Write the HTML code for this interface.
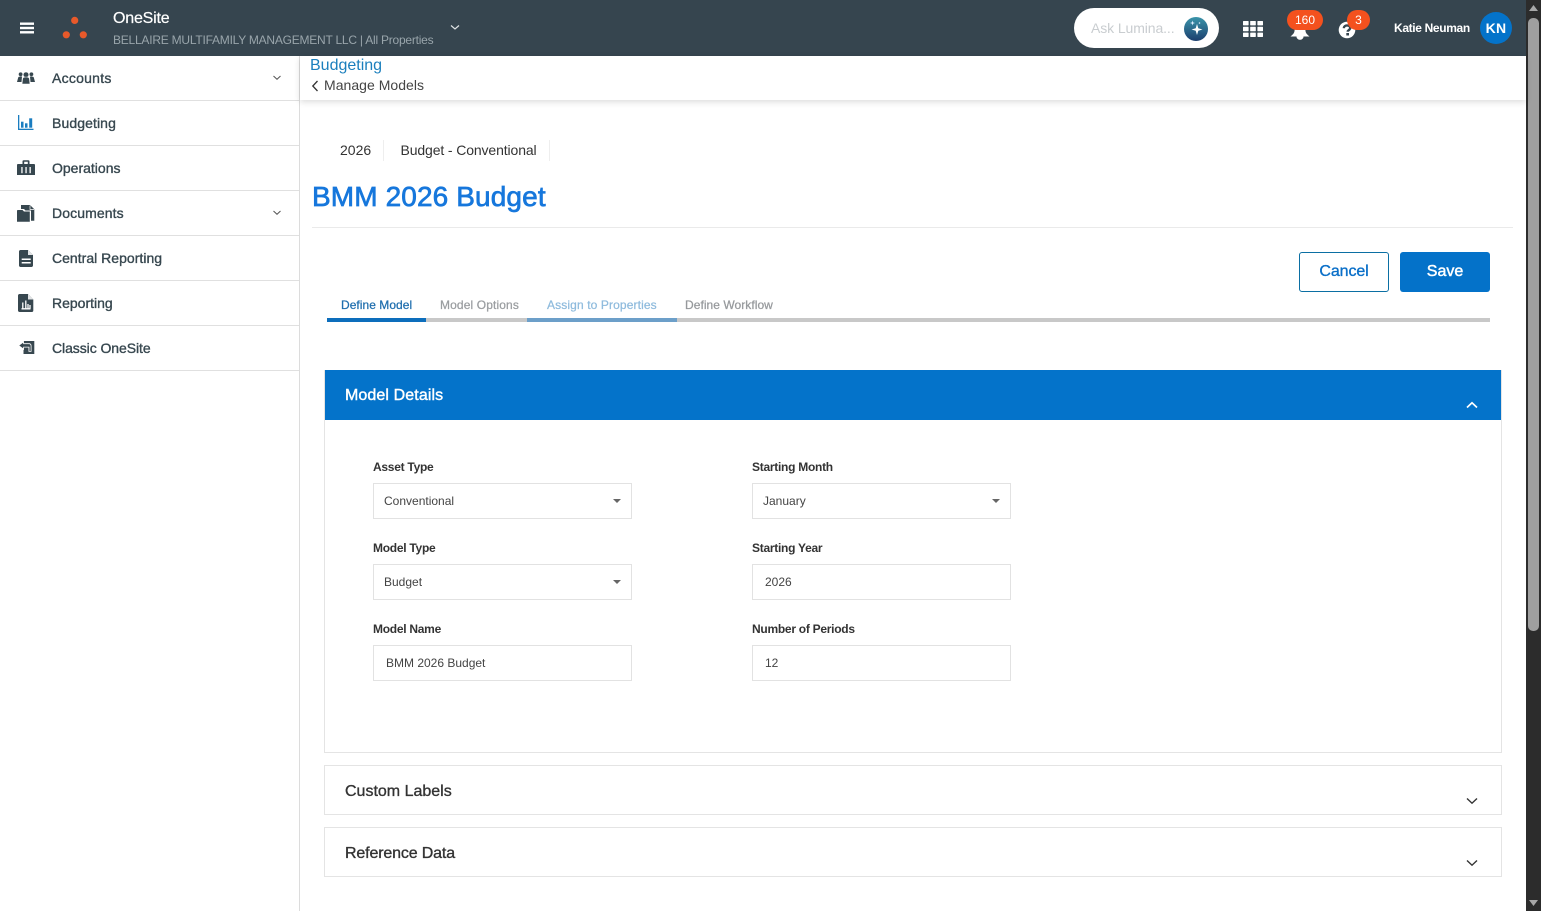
<!DOCTYPE html>
<html lang="en">
<head>
<meta charset="utf-8">
<title>OneSite Budgeting</title>
<style>
html,body{margin:0;padding:0;width:1541px;height:911px;overflow:hidden;background:#fff;font-family:"Liberation Sans",sans-serif;color:#333}
*{box-sizing:border-box}
.a{position:absolute}
.t{position:absolute;white-space:nowrap;line-height:20px;height:20px}
svg{position:absolute;overflow:visible}
.row{position:absolute;left:0;width:299px;height:45px;border-bottom:1px solid #e0e0e0}
.nav{font-size:14px;font-weight:400;color:#37474f;left:52px;-webkit-text-stroke:.35px #37474f}
.lab{font-size:12px;font-weight:700;color:#333;letter-spacing:-.27px}
.val{font-size:12px;color:#444}
.box{position:absolute;width:259px;height:36px;border:1px solid #e2e2e2;background:#fff}
.tab{font-size:12px;-webkit-text-stroke:.25px currentColor;letter-spacing:.04px}
.caret{position:absolute;width:0;height:0;border-left:4px solid transparent;border-right:4px solid transparent;border-top:4px solid #666}
.panel{position:absolute;left:324px;width:1178px;border:1px solid #e4e4e4;background:#fff}
.ph{font-size:16px;color:#333;left:345px;-webkit-text-stroke:.35px #333}
</style>
</head>
<body>

<!-- top bar -->
<div class="a" style="left:0;top:0;width:1526px;height:56px;background:#36454f"></div>
<svg style="left:0;top:0" width="100" height="56">
  <rect x="20" y="22.5" width="14" height="2.4" fill="#fff"/>
  <rect x="20" y="26.8" width="14" height="2.4" fill="#fff"/>
  <rect x="20" y="31.1" width="14" height="2.4" fill="#fff"/>
  <circle cx="74.7" cy="20.4" r="3.6" fill="#e8592a"/>
  <circle cx="66.3" cy="34.8" r="3.6" fill="#e8592a"/>
  <circle cx="83.3" cy="34.8" r="3.6" fill="#e8592a"/>
</svg>
<div class="t" style="left:113px;top:10px;font-size:16px;color:#fff;letter-spacing:-.2px;-webkit-text-stroke:.2px #fff;line-height:18px">OneSite</div>
<div class="t" style="left:113px;top:30px;font-size:12px;color:#99a5ab;letter-spacing:-.23px">BELLAIRE MULTIFAMILY MANAGEMENT LLC | All Properties</div>
<svg style="left:450px;top:24px" width="10" height="8"><path d="M1 1.500L5 5L9 1.500" fill="none" stroke="#dfe3e5" stroke-width="1.200"/></svg>

<!-- lumina -->
<div class="a" style="left:1074px;top:8px;width:145px;height:40px;border-radius:20px;background:#fff"></div>
<div class="t" style="left:1091px;top:18px;font-size:14px;color:#c9cdd0;letter-spacing:-.1px">Ask Lumina...</div>
<svg style="left:1184px;top:17px" width="24" height="24">
  <defs><linearGradient id="g" x1="0" y1="0" x2="0" y2="1"><stop offset="0" stop-color="#3a94aa"/><stop offset="1" stop-color="#1c3f6e"/></linearGradient></defs>
  <circle cx="12" cy="12" r="12" fill="url(#g)"/>
  <path d="M13 7L14.300 11.200L18.500 12.500L14.300 13.800L13 18L11.700 13.800L7.500 12.500L11.700 11.200Z" fill="#fff"/>
  <path d="M8.500 3.500L9.100 5.400L11 6L9.100 6.600L8.500 8.500L7.900 6.600L6 6L7.900 5.400Z" fill="#def"/>
  <circle cx="15.500" cy="6" r=".8" fill="#def"/>
</svg>

<!-- grid -->
<svg style="left:1243px;top:21px" width="20" height="16" fill="#fff">
  <rect x="0" y="0" width="5.6" height="4.400" rx=".6"/><rect x="7.200" y="0" width="5.6" height="4.400" rx=".6"/><rect x="14.400" y="0" width="5.6" height="4.400" rx=".6"/>
  <rect x="0" y="5.800" width="5.6" height="4.400" rx=".6"/><rect x="7.200" y="5.800" width="5.6" height="4.400" rx=".6"/><rect x="14.400" y="5.800" width="5.6" height="4.400" rx=".6"/>
  <rect x="0" y="11.600" width="5.6" height="4.400" rx=".6"/><rect x="7.200" y="11.600" width="5.6" height="4.400" rx=".6"/><rect x="14.400" y="11.600" width="5.6" height="4.400" rx=".6"/>
</svg>

<!-- bell -->
<svg style="left:1289px;top:21px" width="22" height="20">
  <path d="M11 2C6.500 2 6 6 5.500 10C5.200 12.500 3.500 13.800 1.500 15.500H20.500C18.500 13.800 16.800 12.500 16.500 10C16 6 15.500 2 11 2Z" fill="#fff"/>
  <path d="M7.500 15.500H14.500C14.500 17.500 12.800 18.800 11 18.800C9.200 18.800 7.500 17.500 7.500 15.500Z" fill="#fff"/>
</svg>
<div class="a" style="left:1287px;top:10px;width:36px;height:20px;border-radius:10px;background:#f4511e"></div>
<div class="t" style="left:1287px;top:10px;width:36px;text-align:center;font-size:12px;color:#fff">160</div>

<!-- help -->
<svg style="left:1338px;top:21px" width="18" height="18">
  <circle cx="9" cy="9" r="8.300" fill="#fff"/>
  <path d="M5.800 7.200C5.900 5.400 7.300 4.400 9 4.400C10.900 4.400 12.200 5.500 12.200 7C12.200 9 9.700 9 9.700 10.800" fill="none" stroke="#36454f" stroke-width="2.400"/>
  <rect x="8.300" y="12" width="2.700" height="2.500" fill="#36454f"/>
</svg>
<div class="a" style="left:1347px;top:10px;width:23px;height:20px;border-radius:10px;background:#f4511e"></div>
<div class="t" style="left:1347px;top:10px;width:23px;text-align:center;font-size:12px;color:#fff">3</div>

<!-- user -->
<div class="t" style="left:1394px;top:18px;font-size:12px;font-weight:700;color:#fff;letter-spacing:-.35px">Katie Neuman</div>
<div class="a" style="left:1480px;top:12px;width:32px;height:32px;border-radius:50%;background:#0473ca"></div>
<div class="t" style="left:1480px;top:18px;width:32px;text-align:center;font-size:14px;font-weight:700;color:#fff;letter-spacing:.3px">KN</div>

<!-- scrollbar -->
<div class="a" style="left:1526px;top:0;width:15px;height:911px;background:#2c2c2c"></div>
<div class="a" style="left:1528px;top:18px;width:11px;height:613px;border-radius:5px;background:#9f9f9f"></div>
<svg style="left:1526px;top:0" width="15" height="911" fill="#a8a8a8">
  <path d="M7.500 5L12 11H3Z"/>
  <path d="M3 900H12L7.500 906Z"/>
</svg>

<!-- sidebar -->
<div class="a" style="left:299px;top:56px;width:1px;height:855px;background:#dcdcdc"></div>
<div class="row" style="top:56px"></div>
<div class="row" style="top:101px"></div>
<div class="row" style="top:146px"></div>
<div class="row" style="top:191px"></div>
<div class="row" style="top:236px"></div>
<div class="row" style="top:281px"></div>
<div class="row" style="top:326px"></div>

<div class="t nav" style="top:68px;letter-spacing:.25px">Accounts</div>
<div class="t nav" style="top:113px;letter-spacing:.1px">Budgeting</div>
<div class="t nav" style="top:158px">Operations</div>
<div class="t nav" style="top:203px;letter-spacing:.1px">Documents</div>
<div class="t nav" style="top:248px;letter-spacing:.02px">Central Reporting</div>
<div class="t nav" style="top:293px">Reporting</div>
<div class="t nav" style="top:338px;letter-spacing:-.07px">Classic OneSite</div>

<svg style="left:272px;top:75px" width="10" height="6"><path d="M1.500 1L5 4.300L8.500 1" fill="none" stroke="#555" stroke-width="1"/></svg>
<svg style="left:272px;top:210px" width="10" height="6"><path d="M1.500 1L5 4.300L8.500 1" fill="none" stroke="#555" stroke-width="1"/></svg>

<!-- accounts icon -->
<svg style="left:17px;top:72px" width="18" height="12" fill="#37474f">
  <circle cx="3.600" cy="2.300" r="1.900"/><path d="M0 10L1.200 5.500C1.500 4.600 2.500 4.300 5 4.500L4.500 10Z"/>
  <circle cx="14.400" cy="2.300" r="1.900"/><path d="M18 10L16.800 5.500C16.500 4.600 15.500 4.300 13 4.500L13.500 10Z"/>
  <circle cx="9" cy="2.700" r="2.700" stroke="#fff" stroke-width=".5"/>
  <path d="M5 12L5.600 6.800C5.800 5.500 7 5 9 5C11 5 12.200 5.500 12.400 6.800L13 12Z" stroke="#fff" stroke-width=".6"/>
</svg>
<!-- budgeting icon -->
<svg style="left:18px;top:115px" width="16" height="16" fill="#1a7dc0">
  <rect x="0" y="0" width="1.300" height="15"/><rect x="0" y="13.700" width="15.500" height="1.300"/>
  <rect x="3" y="6.700" width="2.500" height="6"/><rect x="7" y="8.300" width="2.500" height="4.400"/><rect x="11.200" y="3.300" width="3" height="9.400"/>
</svg>
<!-- operations icon -->
<svg style="left:17px;top:160px" width="18" height="15">
  <path d="M5.500 4V1.500C5.500 .7 6 .3 6.800 .3H11.200C12 .3 12.500 .7 12.500 1.500V4H17C17.600 4 18 4.400 18 5V15H0V5C0 4.400.400 4 1 4Z M7.200 4H10.800V1.800H7.200Z" fill="#37474f" fill-rule="evenodd"/>
  <rect x="4.300" y="7" width="1.300" height="6.200" fill="#fff"/><rect x="8.400" y="7" width="1.300" height="6.200" fill="#fff"/><rect x="12.500" y="7" width="1.300" height="6.200" fill="#fff"/>
</svg>
<!-- documents icon -->
<svg style="left:17px;top:205px" width="18" height="17" fill="#37474f">
  <path d="M4 0H13L17.300 4.300V15.800H14V5.500H8.500L7 4H4Z"/>
  <path d="M13 .5V4.500H17" fill="none" stroke="#fff" stroke-width=".7"/>
  <path d="M0 5.800C0 5.300.4 5 1 5H5.500L7 6.500H12.800V16.800H0Z"/>
</svg>
<!-- central reporting icon -->
<svg style="left:19px;top:250px" width="14" height="17">
  <path d="M1.500 0H9L14 5V15.500C14 16.300 13.300 17 12.500 17H1.500C.7 17 0 16.300 0 15.500V1.500C0 .7.700 0 1.500 0Z" fill="#37474f"/>
  <path d="M9 0L14 5H9Z" fill="#fff" opacity=".85"/>
  <rect x="2.700" y="8.500" width="9" height="1.500" fill="#fff"/><rect x="2.700" y="12" width="9" height="1.500" fill="#fff"/>
</svg>
<!-- reporting icon -->
<svg style="left:18px;top:294px" width="16" height="18">
  <path d="M1.500 0H10L15.300 5.500V16.500C15.300 17.300 14.800 18 14 18H1.500C.7 18 0 17.300 0 16.500V1.500C0 .7.700 0 1.500 0Z" fill="#37474f"/>
  <path d="M10 0L15.300 5.500H10Z" fill="#fff" opacity=".85"/>
  <path d="M3.500 14.800H12.500M4.800 14.800V8.500M7.800 14.800V6.500M10 14.800V10M12 14.800V11" stroke="#fff" stroke-width="1.300" fill="none"/>
</svg>
<!-- classic icon -->
<svg style="left:18px;top:341px" width="17" height="13">
  <path d="M5.500 0H16.300V13H5.500Z" fill="#37474f"/>
  <path d="M0 4.500L6 0V2.300H11C12.800 2.300 13.500 3.500 13.500 5V10.800H10.500V6.500H6V9Z" fill="#fff"/>
  <path d="M1.300 4.500L5.200 1.600V3.100H11C12.200 3.100 12.700 3.800 12.700 5V10H11.400V5.700H5.200V7.400Z" fill="#37474f"/>
</svg>

<!-- subheader -->
<div class="a" style="left:300px;top:56px;width:1226px;height:44px;background:#fff;box-shadow:0 2px 6px rgba(0,0,0,.14)"></div>
<div class="t" style="left:310px;top:56px;font-size:16px;color:#1b7fbd">Budgeting</div>
<svg style="left:311px;top:80px" width="8" height="12"><path d="M6.500 1L1.800 6L6.500 11" fill="none" stroke="#333" stroke-width="1.300"/></svg>
<div class="t" style="left:324px;top:75px;font-size:14px;color:#444;letter-spacing:.03px">Manage Models</div>

<!-- tags -->
<div class="t" style="left:340px;top:140px;font-size:14px;color:#333">2026</div>
<div class="a" style="left:383px;top:140px;width:1px;height:21px;background:#eee"></div>
<div class="t" style="left:400.500px;top:140px;font-size:14px;color:#333;letter-spacing:-.12px">Budget - Conventional</div>
<div class="a" style="left:549px;top:140px;width:1px;height:21px;background:#eee"></div>

<!-- title -->
<div class="t" style="left:312px;top:182px;height:30px;line-height:30px;font-size:28px;color:#1677dc;letter-spacing:.12px;-webkit-text-stroke:.7px #1677dc">BMM 2026 Budget</div>
<div class="a" style="left:312px;top:227px;width:1201px;height:1px;background:#eaeaea"></div>

<!-- buttons -->
<div class="a" style="left:1299px;top:252px;width:90px;height:40px;border:1px solid #0b6fa3;border-radius:3px;background:#fff"></div>
<div class="t" style="left:1299px;top:263px;width:90px;text-align:center;font-size:16px;color:#0a6fc8;-webkit-text-stroke:.35px #0a6fc8;letter-spacing:-.1px;line-height:18px">Cancel</div>
<div class="a" style="left:1400px;top:252px;width:90px;height:40px;border-radius:3px;background:#0472c9"></div>
<div class="t" style="left:1400px;top:263px;width:90px;text-align:center;font-size:16px;color:#fff;-webkit-text-stroke:.45px #fff;line-height:18px">Save</div>

<!-- tabs -->
<div class="t tab" style="left:341px;top:295px;color:#1f6eae">Define Model</div>
<div class="t tab" style="left:440px;top:295px;color:#9a9da0;letter-spacing:.12px">Model Options</div>
<div class="t tab" style="left:547px;top:295px;color:#8fbbdd;letter-spacing:.12px">Assign to Properties</div>
<div class="t tab" style="left:685px;top:295px;color:#96999c;letter-spacing:.05px">Define Workflow</div>
<div class="a" style="left:327px;top:318px;width:1163px;height:4px;background:#c8c8c8"></div>
<div class="a" style="left:327px;top:318px;width:99px;height:4px;background:#0d6ebc"></div>
<div class="a" style="left:527px;top:318px;width:150px;height:4px;background:#6c9fc9"></div>

<!-- model details -->
<div class="panel" style="top:370px;height:383px"></div>
<div class="a" style="left:325px;top:370px;width:1176px;height:50px;background:#0473ca"></div>
<div class="t" style="left:345px;top:386px;font-size:16px;color:#fff;-webkit-text-stroke:.4px #fff;letter-spacing:.1px;height:20px;line-height:20px">Model Details</div>
<svg style="left:1466px;top:401px" width="12" height="8"><path d="M1 6.500L6 1.800L11 6.500" fill="none" stroke="#fff" stroke-width="1.700"/></svg>

<div class="t lab" style="left:373px;top:457px">Asset Type</div>
<div class="box" style="left:373px;top:483px"></div>
<div class="t val" style="left:384px;top:491px">Conventional</div>
<div class="caret" style="left:613px;top:499px"></div>

<div class="t lab" style="left:373px;top:538px">Model Type</div>
<div class="box" style="left:373px;top:564px"></div>
<div class="t val" style="left:384px;top:572px">Budget</div>
<div class="caret" style="left:613px;top:580px"></div>

<div class="t lab" style="left:373px;top:619px">Model Name</div>
<div class="box" style="left:373px;top:645px"></div>
<div class="t val" style="left:386px;top:653px">BMM 2026 Budget</div>

<div class="t lab" style="left:752px;top:457px">Starting Month</div>
<div class="box" style="left:752px;top:483px"></div>
<div class="t val" style="left:763px;top:491px">January</div>
<div class="caret" style="left:992px;top:499px"></div>

<div class="t lab" style="left:752px;top:538px">Starting Year</div>
<div class="box" style="left:752px;top:564px"></div>
<div class="t val" style="left:765px;top:572px">2026</div>

<div class="t lab" style="left:752px;top:619px">Number of Periods</div>
<div class="box" style="left:752px;top:645px"></div>
<div class="t val" style="left:765px;top:653px">12</div>

<!-- collapsed panels -->
<div class="panel" style="top:765px;height:50px"></div>
<div class="t ph" style="top:782px;line-height:20px">Custom Labels</div>
<svg style="left:1466px;top:797px" width="12" height="8"><path d="M1 1.500L6 6.200L11 1.500" fill="none" stroke="#333" stroke-width="1.400"/></svg>

<div class="panel" style="top:827px;height:50px"></div>
<div class="t ph" style="top:844px;line-height:20px;letter-spacing:-.15px">Reference Data</div>
<svg style="left:1466px;top:859px" width="12" height="8"><path d="M1 1.500L6 6.200L11 1.500" fill="none" stroke="#333" stroke-width="1.400"/></svg>

</body>
</html>
